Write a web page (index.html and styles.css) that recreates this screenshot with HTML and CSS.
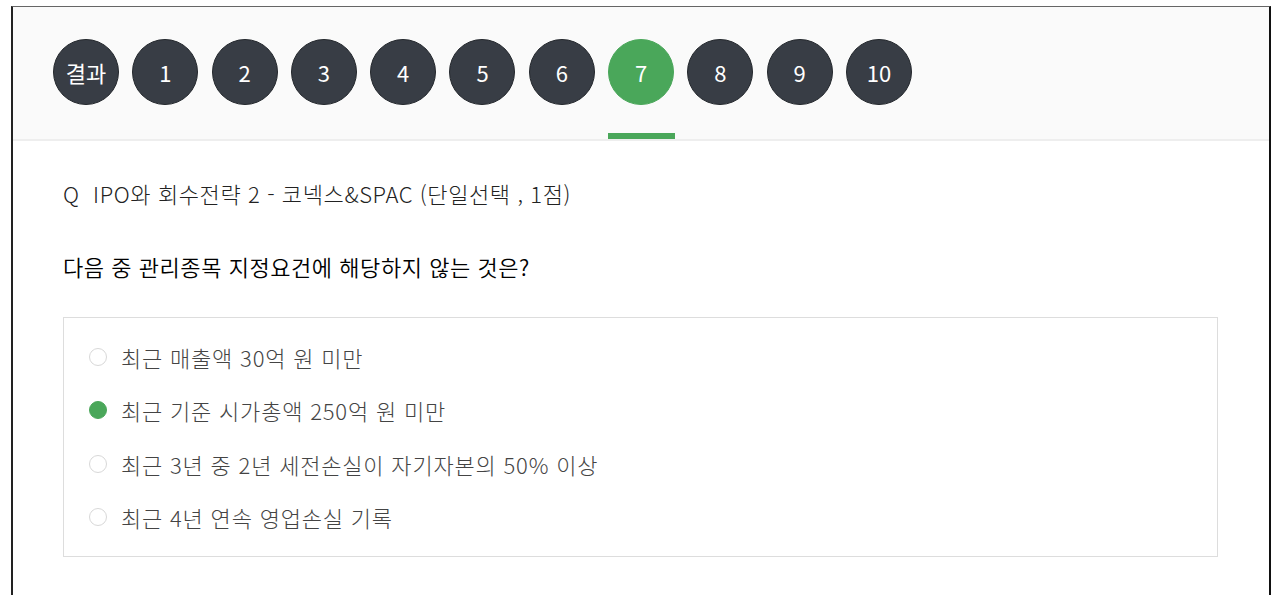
FILE: index.html
```
<!DOCTYPE html>
<html lang="ko">
<head>
<meta charset="utf-8">
<link rel="stylesheet" href="styles.css">
</head>
<body>
<div class="frame">
  <div class="tabs">
    <div class="tab"><span class="dot">결과</span></div>
    <div class="tab"><span class="dot">1</span></div>
    <div class="tab"><span class="dot">2</span></div>
    <div class="tab"><span class="dot">3</span></div>
    <div class="tab"><span class="dot">4</span></div>
    <div class="tab"><span class="dot">5</span></div>
    <div class="tab"><span class="dot">6</span></div>
    <div class="tab active"><span class="dot">7</span></div>
    <div class="tab"><span class="dot">8</span></div>
    <div class="tab"><span class="dot">9</span></div>
    <div class="tab"><span class="dot">10</span></div>
  </div>
  <div class="content">
    <div class="qtitle">Q&nbsp;&nbsp;IPO와 회수전략 2 - 코넥스&amp;SPAC (단일선택 , 1점)</div>
    <div class="qtext">다음 중 관리종목 지정요건에 해당하지 않는 것은?</div>
    <div class="options">
      <div class="opt"><span class="radio"></span><span>최근 매출액 30억 원 미만</span></div>
      <div class="opt"><span class="radio checked"></span><span>최근 기준 시가총액 250억 원 미만</span></div>
      <div class="opt"><span class="radio"></span><span>최근 3년 중 2년 세전손실이 자기자본의 50% 이상</span></div>
      <div class="opt"><span class="radio"></span><span>최근 4년 연속 영업손실 기록</span></div>
    </div>
  </div>
</div>
</body>
</html>
```
FILE: styles.css
```
html, body {
  margin: 0;
  padding: 0;
  background: #fff;
  overflow: hidden;
}
body {
  font-family: "Noto Sans CJK KR", "Noto Sans", sans-serif;
}
.frame {
  margin: 6px 0 0 11px;
  width: 1256px;
  height: 600px;
  border-top: 1px solid #666;
  border-left: 2px solid #222;
  border-right: 2px solid #111;
  box-sizing: content-box;
}
.tabs {
  display: flex;
  gap: 13.3px;
  padding: 32px 0 0 40px;
  height: 100px;
  background: #fafafa;
  border-bottom: 2px solid #eeeeee;
}
.tab {
  width: 66px;
  display: flex;
  flex-direction: column;
  align-items: center;
  gap: 28px;
}
.tab.active::after {
  content: "";
  display: block;
  width: 67px;
  height: 6px;
  background: #4aa75a;
}
.dot {
  width: 64px;
  height: 64px;
  border-radius: 50%;
  background: #383d45;
  border: 1px solid #24282d;
  color: #fff;
  font-size: 22px;
  display: flex;
  align-items: center;
  justify-content: center;
  line-height: 1;
}
.tab.active .dot {
  background: #4aa75a;
  border-color: #4aa75a;
}
.content {
  padding: 34px 0 0 50px;
}
.qtitle {
  font-size: 22px;
  font-weight: 300;
  color: #222;
  line-height: 36px;
  letter-spacing: 0.6px;
}
.qtext {
  font-size: 22px;
  font-weight: 350;
  color: #000;
  line-height: 36px;
  margin-top: 37px;
  letter-spacing: 0.55px;
}
.options {
  margin-top: 33px;
  width: 1155px;
  border: 1px solid #dddddd;
  padding: 21px 0 21px 25px;
  box-sizing: border-box;
  height: 240px;
  display: flex;
  flex-direction: column;
  gap: 18px;
}
.opt {
  display: flex;
  align-items: center;
  gap: 14px;
  height: 36px;
  font-size: 22px;
  font-weight: 300;
  color: #444;
  letter-spacing: 0.8px;
}
.radio {
  width: 18px;
  height: 18px;
  border-radius: 50%;
  border: 1px solid #d8d8d8;
  box-sizing: border-box;
  background: #fff;
  flex: none;
}
.radio.checked {
  background: #4aa75a;
  border-color: #4aa75a;
}
```
